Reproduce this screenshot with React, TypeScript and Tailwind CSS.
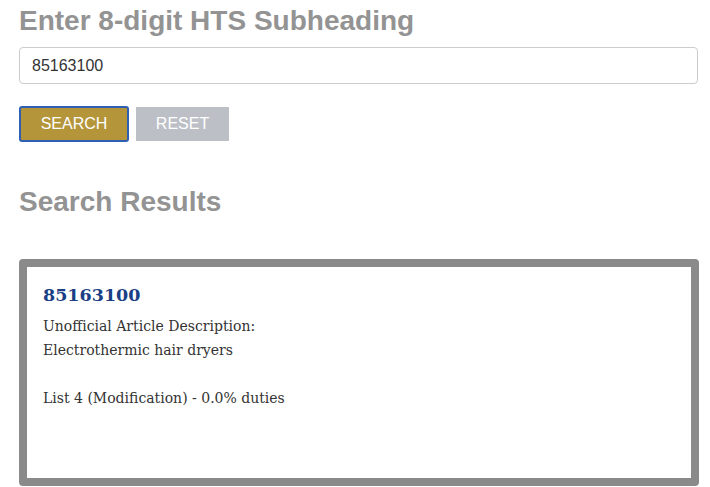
export default function App() {
  return (
    <div className="min-h-[487px] bg-white px-[19px] pt-[3px] font-['Liberation_Sans',Arial,sans-serif]">
      <h2 className="text-[28px] font-bold leading-[36px] text-[#939393]">
        Enter 8-digit HTS Subheading
      </h2>
      <input
        readOnly
        value="85163100"
        className="mt-[8px] block h-[37px] w-[679px] rounded-[4px] border border-[#cccccc] px-[12px] text-[16px] text-[#333333] outline-none"
      />
      <div className="mt-[22px] flex gap-[7px]">
        <button className="h-[36px] w-[110px] rounded-[3px] border-2 border-[#2f5fb3] bg-[#b5953a] text-[16px] text-white">
          SEARCH
        </button>
        <button className="mt-[1px] h-[34px] w-[93px] bg-[#bcc0c6] text-[16px] text-white">
          RESET
        </button>
      </div>
      <h2 className="mt-[42px] text-[28px] font-bold leading-[36px] text-[#939393]">
        Search Results
      </h2>
      <div className="mt-[39px] h-[227px] w-[680px] rounded-[4px] border-[8px] border-[#8a8a8a] px-[16px] pt-[14px] font-['DejaVu_Serif',Georgia,serif] text-[#333333]">
        <div className="text-[17.5px] font-bold leading-[28px] text-[#1b3f85]">85163100</div>
        <div className="mt-[5px] text-[14px] leading-[24px]">
          Unofficial Article Description:
          <br />
          Electrothermic hair dryers
        </div>
        <div className="mt-[24px] text-[14px] leading-[24px]">
          List 4 (Modification) - 0.0% duties
        </div>
      </div>
    </div>
  );
}
